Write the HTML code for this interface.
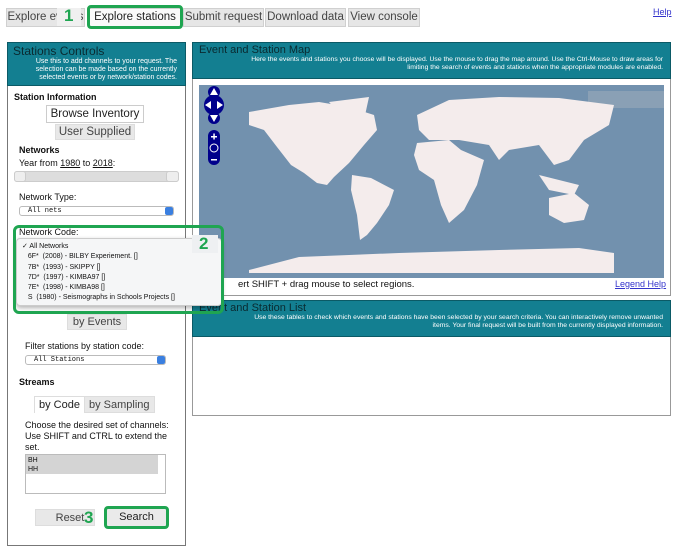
<!DOCTYPE html>
<html><head><meta charset="utf-8"><style>
*{box-sizing:border-box;margin:0;padding:0}
body{width:684px;height:553px;background:#fff;font-family:"Liberation Sans",sans-serif;position:relative;overflow:hidden;color:#111}
.a{position:absolute;white-space:nowrap}
.tab{position:absolute;top:8px;height:19px;background:#e6e6e6;border:1px solid #d0d0d0;font-size:11.5px;color:#444;text-align:center;line-height:17px;white-space:nowrap;overflow:hidden}
.g{position:absolute;border:3px solid #1fa551;border-radius:4px}
.gn{position:absolute;color:#1fa551;font-weight:bold;font-size:17px}
.hd{position:absolute;background:#137f91;color:#fff;white-space:nowrap}
.btn{position:absolute;background:#e8e8e8;border:1px solid #ddd;font-size:12px;color:#444;text-align:center;white-space:nowrap}
.sel{position:absolute;height:10px;border:1px solid #bbb;border-radius:3px;font-family:"Liberation Mono",monospace;font-size:7px;line-height:8px;padding-left:8px;background:#fff}
.sel:after{content:"";position:absolute;right:0;top:0;width:8px;height:8px;background:#3a7fe0;border-radius:2px}
</style></head><body>
<div class="tab" style="left:6px;width:79px">Explore events</div>
<div class="tab" style="left:89px;width:92px;background:#fafafa;color:#222">Explore stations</div>
<div class="tab" style="left:183px;width:81px">Submit request</div>
<div class="tab" style="left:265px;width:81px">Download data</div>
<div class="tab" style="left:348px;width:72px">View console</div>
<div class="g" style="left:87px;top:5px;width:96px;height:24px"></div>
<div class="a" style="left:57px;top:8px;width:24px;height:18px;background:#f0f0f0"></div>
<div class="gn" style="left:64px;top:6px">1</div>
<div class="a" style="left:653px;top:7px;font-size:9px;color:#33c;text-decoration:underline">Help</div>

<!-- left panel -->
<div class="a" style="left:7px;top:42px;width:179px;height:504px;border:1px solid #777"></div>
<div class="hd" style="left:7px;top:42px;width:179px;height:44px;border:1px solid #0b5a66">
<div style="font-size:12px;padding:1px 0 0 5px;color:#0a2a30">Stations Controls</div>
<div style="font-size:7px;text-align:right;padding-right:8px;line-height:8px">Use this to add channels to your request. The<br>selection can be made based on the currently<br>selected events or by network/station codes.</div></div>
<div class="a" style="left:14px;top:92px;font-size:9px;font-weight:bold">Station Information</div>
<div class="btn" style="left:46px;top:105px;width:98px;height:18px;background:#fff;border-color:#ccc;font-size:11.5px;line-height:16px;color:#222">Browse Inventory</div>
<div class="btn" style="left:55px;top:124px;width:80px;height:16px;font-size:11.5px;line-height:15px">User Supplied</div>
<div class="a" style="left:19px;top:145px;font-size:9px;font-weight:bold">Networks</div>
<div class="a" style="left:19px;top:158px;font-size:9px">Year from <u>1980</u> to <u>2018</u>:</div>
<div class="a" style="left:14px;top:171px;width:165px;height:11px;background:#ddd;border-radius:3px;border:1px solid #ccc"></div>
<div class="a" style="left:14px;top:171px;width:12px;height:11px;background:#eee;border:1px solid #ccc;border-radius:3px"></div>
<div class="a" style="left:166px;top:171px;width:13px;height:11px;background:#eee;border:1px solid #ccc;border-radius:3px"></div>
<div class="a" style="left:19px;top:192px;font-size:9px">Network Type:</div>
<div class="sel" style="left:19px;top:206px;width:155px">All nets</div>
<div class="a" style="left:19px;top:227px;font-size:9px">Network Code:</div>
<div class="btn" style="left:67px;top:314px;width:60px;height:16px;font-size:11px;line-height:15px">by Events</div>
<div class="a" style="left:25px;top:341px;font-size:9px">Filter stations by station code:</div>
<div class="sel" style="left:25px;top:355px;width:141px">All Stations</div>
<div class="a" style="left:19px;top:377px;font-size:9px;font-weight:bold">Streams</div>
<div class="btn" style="left:34px;top:396px;width:121px;height:17px;font-size:11px;line-height:16px;text-align:left"><span style="display:inline-block;width:50px;background:#fff;border-right:1px solid #ddd;text-align:center;color:#222">by Code</span><span style="padding-left:4px">by Sampling</span></div>
<div class="a" style="left:25px;top:420px;font-size:9px;line-height:11px">Choose the desired set of channels:<br>Use SHIFT and CTRL to extend the<br>set.</div>
<div class="a" style="left:25px;top:454px;width:141px;height:40px;border:1px solid #bbb;font-size:7px;line-height:9px"><div style="background:#d4d4d4;width:132px;height:19px;padding:1px 0 0 2px">BH<br>HH</div></div>
<div class="btn" style="left:35px;top:509px;width:60px;height:17px;font-size:11px;line-height:16px;padding-left:10px">Reset</div>
<div class="gn" style="left:84px;top:508px">3</div>
<div class="g" style="left:104px;top:506px;width:65px;height:23px;line-height:17px;text-align:center;font-size:11px;color:#222;background:#eaeaea">Search</div>

<!-- right map panel -->
<div class="a" style="left:192px;top:42px;width:479px;height:254px;border:1px solid #999"></div>
<div class="hd" style="left:192px;top:42px;width:479px;height:37px;border:1px solid #0b5a66">
<div style="font-size:11px;padding:1px 0 0 6px;color:#0a2a30">Event and Station Map</div>
<div style="font-size:6.8px;text-align:right;padding-right:7px;line-height:8px">Here the events and stations you choose will be displayed. Use the mouse to drag the map around. Use the Ctrl-Mouse to draw areas for<br>limiting the search of events and stations when the appropriate modules are enabled.</div></div>
<svg class="a" style="left:199px;top:85px" width="465" height="193" viewBox="0 0 465 193">
<rect width="465" height="193" fill="#7291ae"/>
<rect x="389" y="6" width="76" height="17" fill="#8aa0b5"/>
<g fill="#f4ecec">
<polygon points="50,27 90,20 120,17 150,22 175,30 178,45 165,60 150,78 135,92 128,100 118,98 105,88 92,80 78,62 65,45 50,40"/>
<polygon points="130,17 170,12 165,35 150,40"/>
<polygon points="153,90 172,93 195,105 190,120 178,138 168,150 161,155 158,130 152,105"/>
<polygon points="218,30 250,15 300,12 360,13 415,20 410,40 385,55 370,75 355,80 340,60 310,65 300,75 290,60 260,55 230,55 220,45"/>
<polygon points="218,58 250,55 262,65 285,75 278,100 265,125 250,138 242,120 235,95 220,85 215,70"/>
<polygon points="340,90 360,95 380,100 375,110 350,105"/>
<polygon points="350,113 375,108 390,120 385,135 365,138 350,130"/>
<polygon points="50,185 100,172 200,168 300,165 380,163 415,168 415,188 50,188"/>
</g>
<g fill="#00008b">
<circle cx="15" cy="20" r="10"/><circle cx="15" cy="7" r="6"/><circle cx="15" cy="33" r="6"/>
<rect x="9" y="45" width="12" height="35" rx="6"/>
</g>
<g fill="#fff"><polygon points="15,3 11,10 19,10"/><polygon points="15,37 11,30 19,30"/><polygon points="6,20 12,16 12,24"/><polygon points="24,20 18,16 18,24"/>
<rect x="12" y="51" width="6" height="1.5"/><rect x="14.3" y="48.5" width="1.5" height="6"/><circle cx="15" cy="63" r="4" fill="none" stroke="#fff" stroke-width="1"/><rect x="12" y="74" width="6" height="1.5"/></g>
</svg>
<div class="a" style="left:238px;top:279px;font-size:9.5px">ert SHIFT + drag mouse to select regions.</div>
<div class="a" style="left:615px;top:279px;font-size:9px;color:#33c;text-decoration:underline">Legend Help</div>

<!-- event list -->
<div class="a" style="left:192px;top:300px;width:479px;height:116px;border:1px solid #999"></div>
<div class="hd" style="left:192px;top:300px;width:479px;height:37px;border:1px solid #0b5a66">
<div style="font-size:11px;padding:1px 0 0 6px;color:#0a2a30">Event and Station List</div>
<div style="font-size:6.8px;text-align:right;padding-right:7px;line-height:8px">Use these tables to check which events and stations have been selected by your search criteria. You can interactively remove unwanted<br>items. Your final request will be built from the currently displayed information.</div></div>

<!-- dropdown -->
<div class="a" style="left:16px;top:238px;width:206px;height:68px;background:#f5f6f7;border:1px solid #ccc;border-radius:4px;box-shadow:0 2px 5px rgba(0,0,0,.3);font-size:7px;line-height:10.3px;padding:3px 0 0 5px">
✓ All Networks<br>&nbsp;&nbsp;&nbsp;6F* &nbsp;(2008) - BILBY Experiement. []<br>&nbsp;&nbsp;&nbsp;7B* &nbsp;(1993) - SKIPPY []<br>&nbsp;&nbsp;&nbsp;7D* &nbsp;(1997) - KIMBA97 []<br>&nbsp;&nbsp;&nbsp;7E* &nbsp;(1998) - KIMBA98 []<br>&nbsp;&nbsp;&nbsp;S &nbsp;(1980) - Seismographs in Schools Projects []</div>
<div class="a" style="left:192px;top:235px;width:26px;height:18px;background:#eef0f2"></div>
<div class="gn" style="left:199px;top:234px">2</div>
<div class="g" style="left:13px;top:225px;width:211px;height:89px;border-radius:6px"></div>
</body></html>
